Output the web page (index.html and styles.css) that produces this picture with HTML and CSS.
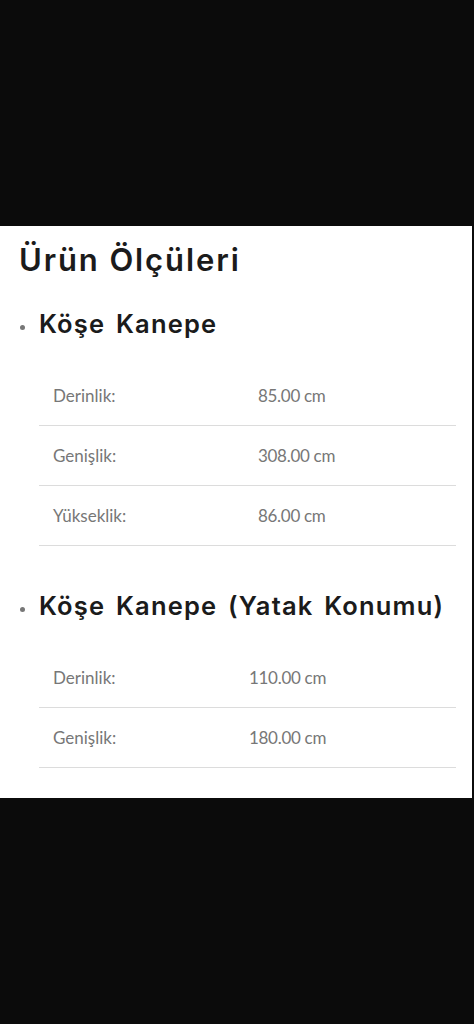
FILE: index.html
```html
<!DOCTYPE html>
<html lang="tr">
<head>
<meta charset="utf-8">
<link rel="stylesheet" href="styles.css">
</head>
<body>
<div class="top"></div>
<section class="panel">
  <h2 class="title">Ürün Ölçüleri</h2>
  <ul class="groups">
    <li class="group">
      <h3 class="group-title">Köşe Kanepe</h3>
      <table class="dims dims-a">
        <tr><td class="k">Derinlik:</td><td class="v">85.00 cm</td></tr>
        <tr><td class="k">Genişlik:</td><td class="v">308.00 cm</td></tr>
        <tr><td class="k">Yükseklik:</td><td class="v">86.00 cm</td></tr>
      </table>
    </li>
    <li class="group">
      <h3 class="group-title">Köşe Kanepe (Yatak Konumu)</h3>
      <table class="dims dims-b">
        <tr><td class="k">Derinlik:</td><td class="v">110.00 cm</td></tr>
        <tr><td class="k">Genişlik:</td><td class="v">180.00 cm</td></tr>
      </table>
    </li>
  </ul>
</section>
<div class="bottom"></div>
</body>
</html>
```
FILE: styles.css
```css
html, body {
  margin: 0;
  padding: 0;
  background: #0b0b0b;
}
.top {
  height: 226px;
}
.panel {
  background: #fff;
  width: 472px;
  height: 572px;
  box-sizing: border-box;
  padding: 12px 18px 0 19px;
  overflow: hidden;
}
.title {
  margin: 0;
  font-family: "Inter", "Noto Sans", sans-serif;
  font-weight: 600;
  font-size: 31px;
  line-height: 44px;
  letter-spacing: 1.9px;
  color: #1b1b1b;
}
.groups {
  list-style: none;
  margin: 0;
  padding: 0;
}
.group {
  position: relative;
  padding-left: 20px;
}
.group::before {
  content: "";
  position: absolute;
  left: 1px;
  top: 20px;
  width: 5px;
  height: 5px;
  border-radius: 50%;
  background: #777;
}
.group:first-child {
  margin-top: 23px;
}
.group + .group {
  margin-top: 41px;
}
.group-title {
  margin: 0;
  font-family: "Inter", "Noto Sans", sans-serif;
  font-weight: 600;
  font-size: 25.5px;
  line-height: 38px;
  letter-spacing: 1.2px;
  word-spacing: 3px;
  color: #1b1b1b;
}
.dims {
  width: 417px;
  border-collapse: collapse;
  margin-top: 23px;
  font-family: "Lato", sans-serif;
  font-size: 17px;
  color: #777;
}
.dims td {
  height: 59px;
  padding: 0;
  border-bottom: 1px solid #dcdcdc;
  vertical-align: middle;
}
.dims .k {
  padding-left: 14px;
}
.dims .v {
  letter-spacing: -0.3px;
}
.dims-a .k { width: 205px; }
.dims-b .k { width: 196px; }
```
